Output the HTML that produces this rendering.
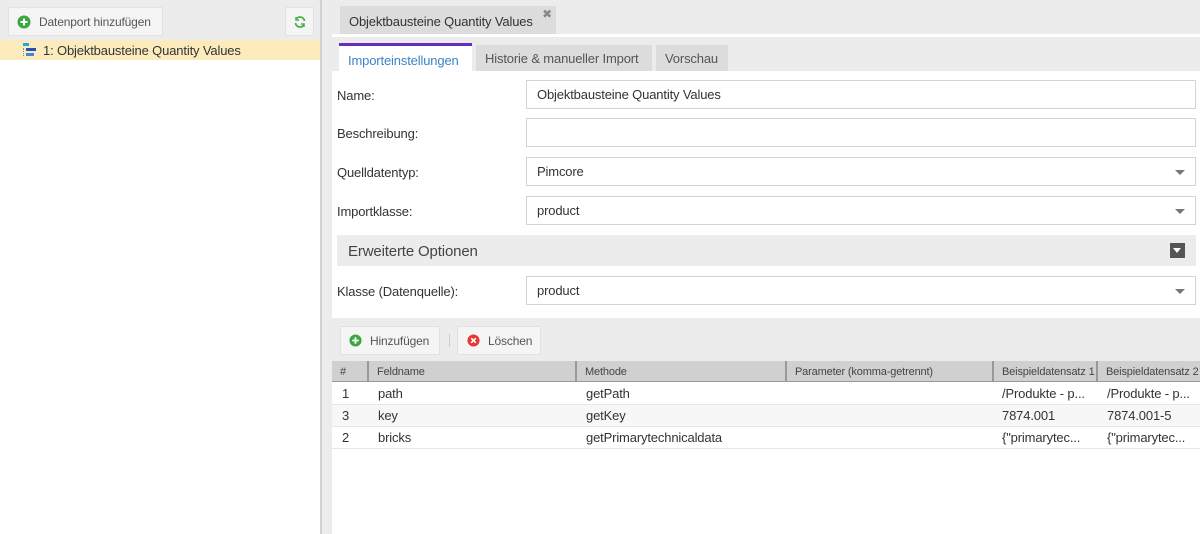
<!DOCTYPE html>
<html><head><meta charset="utf-8"><style>
*{box-sizing:border-box;margin:0;padding:0}
body{width:1200px;height:534px;overflow:hidden;font-family:"Liberation Sans",sans-serif;font-size:13px;color:#333;background:#fff;position:relative;letter-spacing:-0.15px}
.a{position:absolute}
.btn{position:absolute;background:#f5f5f5;border:1px solid #e2e2e2;color:#555;font-size:12px;display:flex;align-items:center}
.lbl{position:absolute;left:337px;font-size:13px;color:#333}
.inp{position:absolute;left:526px;width:670px;height:29px;border:1px solid #d4d4d4;background:#fff;padding-left:10px;line-height:28px;font-size:13px}
.arr{position:absolute;right:10px;top:12px;width:0;height:0;border-left:5px solid transparent;border-right:5px solid transparent;border-top:5px solid #777}
.th{position:absolute;top:361px;height:21px;line-height:22px;font-size:11px;color:#444;padding-left:8px;border-right:2px solid #999}
.row{position:absolute;left:332px;width:868px;height:22px;border-bottom:1px solid #e6e6e6;font-size:13px;line-height:22px}
.row span{position:absolute}
</style></head><body>
<div class="a" style="left:0;top:0;width:320px;height:40px;background:#ececec"></div>
<div class="btn" style="left:8px;top:7px;width:155px;height:29px;padding-left:8px"><svg width="14" height="14" viewBox="0 0 14 14"><circle cx="7" cy="7" r="6.5" fill="#3ca640"/><path d="M7 3.5v7M3.5 7h7" stroke="#fff" stroke-width="2"/></svg><span style="margin-left:8px;font-size:12px">Datenport hinzufügen</span></div>
<div class="btn" style="left:285px;top:7px;width:29px;height:29px;justify-content:center"><svg width="14" height="14" viewBox="0 0 14 14"><path d="M2.5 8A4.5 4.5 0 0 0 11 9.5M11.5 6A4.5 4.5 0 0 0 3 4.5" stroke="#4caf50" stroke-width="1.8" fill="none"/><path d="M11 12l0-3-3 0M3 2l0 3 3 0" stroke="#4caf50" stroke-width="1.5" fill="none"/></svg></div>
<div class="a" style="left:0;top:40px;width:320px;height:20px;background:#fcecbd"></div>
<div class="a" style="left:23px;top:43px;width:6px;height:3px;background:#1fa9d6"></div>
<div class="a" style="left:26px;top:48px;width:10px;height:3px;background:#2a4fb0"></div>
<div class="a" style="left:26px;top:53px;width:8px;height:3px;background:#3b8ae0"></div>
<div class="a" style="left:23px;top:48px;width:2px;height:8px;border-left:1px dotted #888"></div>
<div class="a" style="left:43px;top:43px;font-size:13px;color:#333">1: Objektbausteine Quantity Values</div>
<div class="a" style="left:320px;top:0;width:12px;height:534px;background:#ececec;border-left:2px solid #d2d2d2"></div>
<div class="a" style="left:332px;top:0;width:868px;height:534px;background:#fff"></div>
<div class="a" style="left:332px;top:0;width:868px;height:34px;background:#ececec"></div>
<div class="a" style="left:340px;top:6px;width:216px;height:28px;background:#dcdcdc;font-size:13px;padding:8px 0 0 9px;color:#333">Objektbausteine Quantity Values<span style="position:absolute;right:4px;top:1px;color:#888;font-size:12px">✖</span></div>
<div class="a" style="left:332px;top:37px;width:868px;height:34px;background:#ececec"></div>
<div class="a" style="left:339px;top:43px;width:133px;height:28px;background:#fff;border-top:3px solid #6a2cbf;color:#3c84c6;padding:7px 0 0 9px">Importeinstellungen</div>
<div class="a" style="left:476px;top:45px;width:176px;height:26px;background:#dcdcdc;color:#555;padding:6px 0 0 9px">Historie &amp; manueller Import</div>
<div class="a" style="left:656px;top:45px;width:72px;height:26px;background:#dcdcdc;color:#555;padding:6px 0 0 9px">Vorschau</div>

<div class="lbl" style="top:88px">Name:</div><div class="inp" style="top:80px">Objektbausteine Quantity Values</div>
<div class="lbl" style="top:126px">Beschreibung:</div><div class="inp" style="top:118px"></div>
<div class="lbl" style="top:165px">Quelldatentyp:</div><div class="inp" style="top:157px">Pimcore<div class="arr"></div></div>
<div class="lbl" style="top:204px">Importklasse:</div><div class="inp" style="top:196px">product<div class="arr"></div></div>
<div class="a" style="left:337px;top:235px;width:859px;height:31px;background:#ececec;font-size:15px;color:#444;padding:8px 0 0 11px">Erweiterte Optionen</div>
<div class="a" style="left:1170px;top:243px;width:15px;height:15px;background:#555"><div style="position:absolute;left:3px;top:5px;border-left:4.5px solid transparent;border-right:4.5px solid transparent;border-top:5px solid #fff"></div></div>
<div class="lbl" style="top:284px">Klasse (Datenquelle):</div><div class="inp" style="top:276px">product<div class="arr"></div></div>

<div class="a" style="left:332px;top:318px;width:868px;height:43px;background:#ececec"></div>
<div class="btn" style="left:340px;top:326px;width:100px;height:29px;padding-left:8px"><svg width="13" height="13" viewBox="0 0 14 14"><circle cx="7" cy="7" r="6.5" fill="#3ca640"/><path d="M7 3.5v7M3.5 7h7" stroke="#fff" stroke-width="2"/></svg><span style="margin-left:8px">Hinzufügen</span></div>
<div class="a" style="left:449px;top:334px;width:1px;height:13px;background:#ccc"></div>
<div class="btn" style="left:457px;top:326px;width:84px;height:29px;padding-left:9px"><svg width="13" height="13" viewBox="0 0 14 14"><circle cx="7" cy="7" r="6.5" fill="#e53935"/><path d="M4.5 4.5l5 5M9.5 4.5l-5 5" stroke="#fff" stroke-width="1.8"/></svg><span style="margin-left:8px">Löschen</span></div>

<div class="a" style="left:332px;top:361px;width:868px;height:21px;background:#d0d0d0;border-bottom:1px solid #999"></div>
<div class="th" style="left:332px;width:37px">#</div>
<div class="th" style="left:369px;width:208px">Feldname</div>
<div class="th" style="left:577px;width:210px">Methode</div>
<div class="th" style="left:787px;width:207px">Parameter (komma-getrennt)</div>
<div class="th" style="left:994px;width:104px;overflow:hidden;white-space:nowrap">Beispieldatensatz 1</div>
<div class="th" style="left:1098px;width:110px;border:none;overflow:hidden;white-space:nowrap">Beispieldatensatz 2</div>

<div class="row" style="top:383px"><span style="left:10px">1</span><span style="left:46px">path</span><span style="left:254px">getPath</span><span style="left:670px">/Produkte - p...</span><span style="left:775px">/Produkte - p...</span></div>
<div class="row" style="top:405px;background:#f7f7f7"><span style="left:10px">3</span><span style="left:46px">key</span><span style="left:254px">getKey</span><span style="left:670px">7874.001</span><span style="left:775px">7874.001-5</span></div>
<div class="row" style="top:427px"><span style="left:10px">2</span><span style="left:46px">bricks</span><span style="left:254px">getPrimarytechnicaldata</span><span style="left:670px">{"primarytec...</span><span style="left:775px">{"primarytec...</span></div>
</body></html>
